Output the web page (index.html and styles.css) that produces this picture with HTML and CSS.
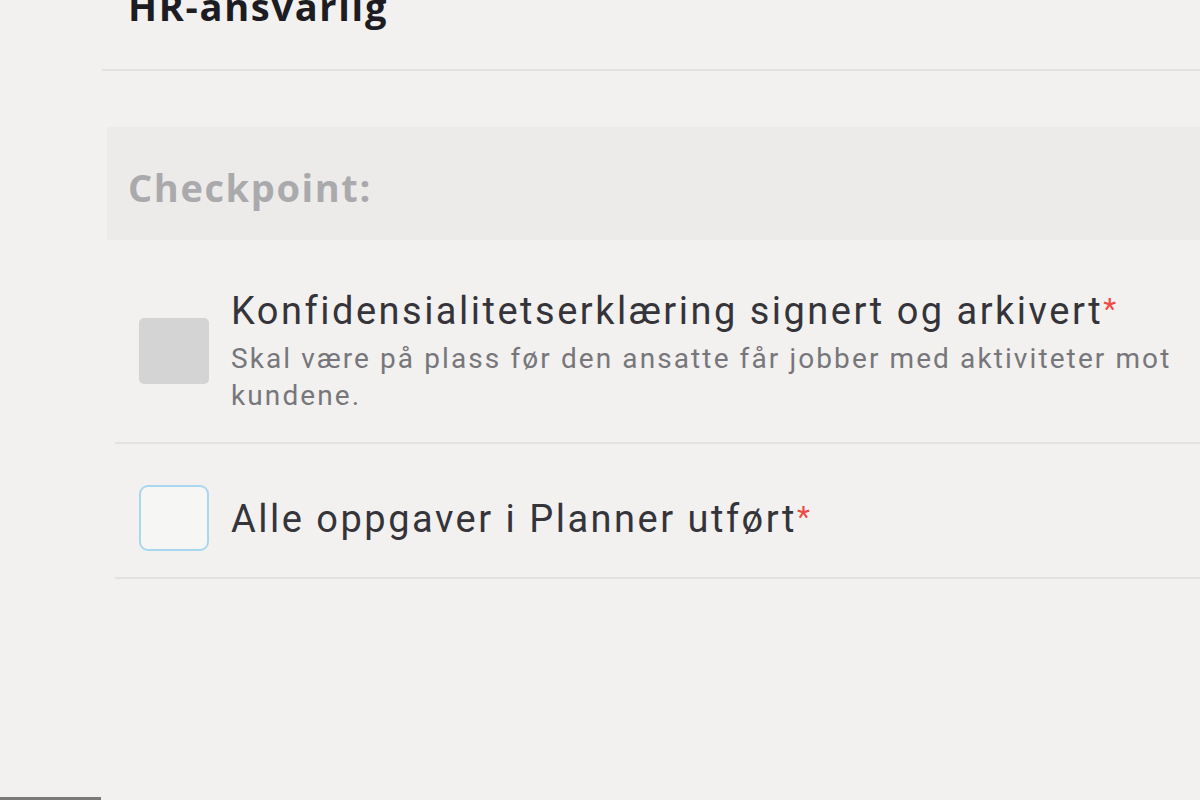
FILE: index.html
```html
<!DOCTYPE html>
<html lang="no">
<head>
<meta charset="utf-8">
<title>Checkpoint</title>
<link rel="stylesheet" href="styles.css">
</head>
<body>
<div class="layout">
  <aside class="side"><div class="side-bar"></div></aside>
  <main class="main">
    <div class="section-head">HR-ansvarlig</div>
    <div class="band"><span class="band-title">Checkpoint:</span></div>
    <ul class="checklist">
      <li class="item item-first">
        <span class="box box-disabled"></span>
        <div class="item-text">
          <div class="item-title">Konfidensialitetserklæring signert og arkivert<span class="req">*</span></div>
          <div class="item-desc">Skal være på plass før den ansatte får jobber med aktiviteter mot kundene.</div>
        </div>
      </li>
      <li class="item item-second">
        <span class="box box-empty"></span>
        <div class="item-text">
          <div class="item-title">Alle oppgaver i Planner utført<span class="req">*</span></div>
        </div>
      </li>
    </ul>
  </main>
</div>
</body>
</html>
```

FILE: styles.css
```css
html, body {
  margin: 0;
  padding: 0;
  height: 100%;
  overflow: hidden;
}
body {
  background: #f2f1ef;
  font-family: Roboto, "Open Sans", sans-serif;
  color: #333;
}
.layout {
  display: flex;
  height: 800px;
}
.side {
  width: 102px;
  flex: none;
  display: flex;
  flex-direction: column;
  justify-content: flex-end;
}
.side-bar {
  height: 3px;
  background: #7a7a7a;
  width: 101px;
}
.main {
  flex: 1;
  min-width: 0;
}
.section-head {
  font-family: "Open Sans", sans-serif;
  font-weight: 700;
  font-size: 38px;
  line-height: 44px;
  letter-spacing: 1.7px;
  color: #1c1c22;
  margin-top: -16px;
  padding: 0 0 41px 26px;
  border-bottom: 2px solid #e3e2e0;
}
.band {
  margin: 56px 0 0 5px;
  height: 113px;
  background: #ecebea;
  box-sizing: border-box;
  padding: 38px 0 0 21px;
}
.band-title {
  font-family: "Open Sans", sans-serif;
  font-weight: 700;
  font-size: 38px;
  line-height: 44px;
  letter-spacing: 1.6px;
  color: #aaaaad;
  display: block;
}
.checklist {
  list-style: none;
  margin: 0 0 0 13px;
  padding: 0;
}
.item {
  display: flex;
  align-items: center;
  gap: 22px;
  padding-left: 24px;
  border-bottom: 2px solid #e3e2e0;
}
.item-first {
  padding-top: 47px;
  padding-bottom: 28px;
}
.item-second {
  padding-top: 41px;
  padding-bottom: 26px;
}
.box {
  width: 70px;
  height: 66px;
  flex: none;
  box-sizing: border-box;
}
.box-disabled {
  background: #d4d4d4;
  border-radius: 5px;
}
.box-empty {
  border: 2.5px solid #a9d8ee;
  border-radius: 9px;
  background: #f6f6f5;
}
.item-text {
  flex: 1;
  min-width: 0;
}
.item-title {
  font-size: 38px;
  line-height: 44px;
  letter-spacing: 2.5px;
  color: #34343a;
  white-space: nowrap;
}
.item-first .item-title {
  margin-bottom: 7px;
}
.req {
  color: #ec4a45;
  font-size: 30px;
  letter-spacing: 0;
  vertical-align: 5px;
}
.item-desc {
  font-size: 28px;
  line-height: 37px;
  letter-spacing: 2.1px;
  color: #77777b;
  padding-right: 10px;
}
```
